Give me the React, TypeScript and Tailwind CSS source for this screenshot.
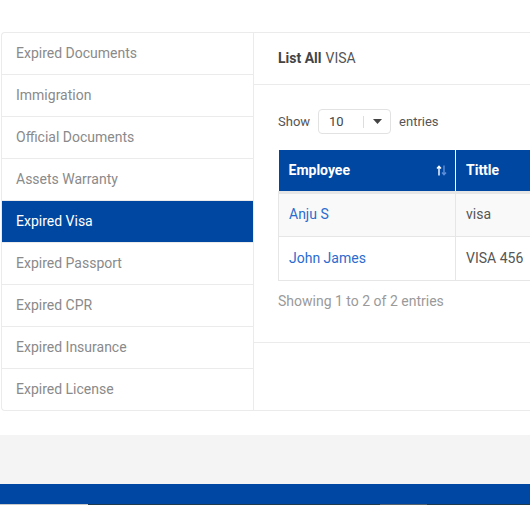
import React from 'react'

const menu = [
  'Expired Documents',
  'Immigration',
  'Official Documents',
  'Assets Warranty',
  'Expired Visa',
  'Expired Passport',
  'Expired CPR',
  'Expired Insurance',
  'Expired License',
]

const rows = [
  { name: 'Anju S', title: 'visa' },
  { name: 'John James', title: 'VISA 456' },
]

function SortIcon() {
  return (
    <svg width="11" height="11" viewBox="0 0 11 11">
      <path d="M3 10.5V1.5M1 3.5L3 1.2L5 3.5" stroke="#fff" strokeWidth="1.4" fill="none" />
      <path d="M8 0.5V9.5M6 7.5L8 9.8L10 7.5" stroke="#5f8fd8" strokeWidth="1.4" fill="none" />
    </svg>
  )
}

export default function App() {
  return (
    <div className="w-[530px] h-[505px] overflow-hidden bg-white font-['Roboto',sans-serif]">
      <div className="h-[435px] pt-8">
        <div className="ml-px flex w-[800px] rounded-l border border-r-0 border-[#ebebeb] bg-white">
          {/* Sidebar */}
          <ul className="w-[252px] shrink-0 border-r border-[#ebebeb]">
            {menu.map((item, i) => (
              <li
                key={item}
                className={
                  'flex items-center px-[14px] text-[14px] ' +
                  (item === 'Expired Visa'
                    ? 'bg-[#0047a2] text-white'
                    : 'text-[#8a8a8a]') +
                  (i < menu.length - 1 ? ' h-[42px] border-b border-[#ebebeb]' : ' h-[41px]')
                }
              >
                {item}
              </li>
            ))}
          </ul>

          {/* Content */}
          <div className="flex-1">
            <div className="flex h-[52px] items-center border-b border-[#ebebeb] px-6 text-[14px] text-[#555]">
              <span className="mr-1 font-bold text-[#444]">List All</span> VISA
            </div>
            <div className="border-b border-[#ebebeb] px-6 pt-6 pb-[30px]">
              <div className="mb-4 flex items-center text-[13px] text-[#555]">
                <span>Show</span>
                <div className="mx-2 flex h-[25px] w-[73px] items-center rounded border border-[#e2e2e2] pl-[10px] text-[13px] text-[#444]">
                  <span className="flex-1">10</span>
                  <span className="h-[12px] border-l border-[#ddd]" />
                  <span className="flex w-[26px] justify-center">
                    <svg width="9" height="5" viewBox="0 0 9 5">
                      <path d="M0 0h9L4.5 5z" fill="#444" />
                    </svg>
                  </span>
                </div>
                <span>entries</span>
              </div>
              <table className="w-[560px] border-collapse text-[14px]">
                <thead>
                  <tr className="h-[42px] bg-[#0047a2] text-white">
                    <th className="w-[177px] border-r border-r-white border-b-[3px] border-b-[#e6e6e6] pl-[10px] pr-2 text-left font-bold">
                      <div className="flex items-center justify-between">
                        <span>Employee</span>
                        <SortIcon />
                      </div>
                    </th>
                    <th className="border-b-[3px] border-b-[#e6e6e6] pl-[10px] text-left font-bold">Tittle</th>
                  </tr>
                </thead>
                <tbody>
                  {rows.map((r, i) => (
                    <tr
                      key={r.name}
                      className={'h-[44px] ' + (i === 0 ? 'bg-[#f9f9f9]' : 'bg-white')}
                    >
                      <td className="border border-[#e6e6e6] pl-[10px] text-[#2a6ccf]">{r.name}</td>
                      <td className="border border-[#e6e6e6] pl-[10px] text-[#555]">{r.title}</td>
                    </tr>
                  ))}
                </tbody>
              </table>
              <div className="mt-[10px] text-[14px] text-[#9a9a9a]">Showing 1 to 2 of 2 entries</div>
            </div>
          </div>
        </div>
      </div>
      <div className="h-[49px] bg-[#f4f4f4]" />
      <div className="h-[20px] bg-[#0047a3]" />
      <div className="flex h-px">
        <div className="w-[88px] bg-[#c9c9c9]" />
        <div className="w-[292px] bg-[#1f3b4d]" />
        <div className="w-[47px] bg-[#56626c]" />
        <div className="flex-1 bg-[#1f3b4d]" />
      </div>
    </div>
  )
}
